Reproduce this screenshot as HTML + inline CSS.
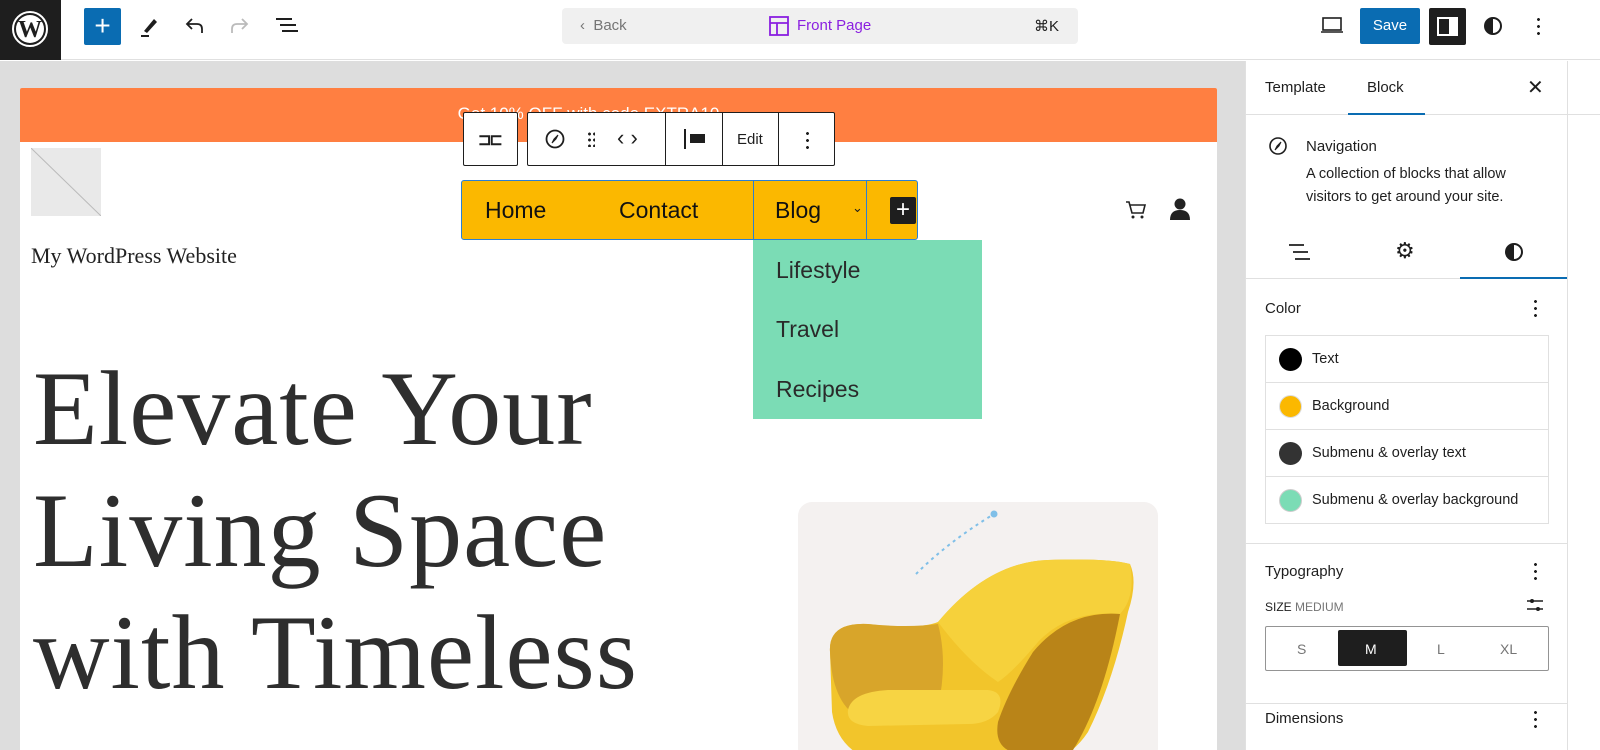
<!DOCTYPE html>
<html><head><meta charset="utf-8"><style>
*{box-sizing:border-box;margin:0;padding:0}
body{width:1600px;height:750px;overflow:hidden;font-family:"Liberation Sans",sans-serif;background:#fff;position:relative;color:#1e1e1e}
.abs{position:absolute}
.top{left:0;top:0;width:1600px;height:60px;background:#fff;border-bottom:1px solid #e0e0e0}
.canvas{left:0;top:61px;width:1245px;height:689px;background:#ddd}
.page{left:20px;top:88px;width:1197px;height:662px;background:#fff;border-radius:2px 2px 0 0;overflow:hidden}
.side{left:1245px;top:61px;width:355px;height:689px;background:#fff;border-left:1px solid #e0e0e0}
.tb{background:#fff;border:1px solid #1e1e1e;border-radius:2px;height:54px}
.nav{font-size:23px;color:#111}
.sub{font-size:23px;color:#2a2a2a}
.crow{height:47px;border-top:1px solid #e0e0e0;display:flex;align-items:center;padding-left:13px;font-size:14.5px}
.dot{width:23px;height:23px;border-radius:50%;margin-right:10px}
.dots{width:3px}
</style></head><body>
<div class="abs top"></div>
<div class="abs" style="left:0;top:0;width:61px;height:60px;background:#1e1e1e"></div>
<svg class="abs" style="left:11px;top:10px" width="38" height="38" viewBox="0 0 38 38"><circle cx="19" cy="19" r="17" fill="none" stroke="#fff" stroke-width="2"/><circle cx="19" cy="19" r="14" fill="#fff"/><text x="19" y="27" font-family="Liberation Serif" font-size="24" font-weight="bold" text-anchor="middle" fill="#1e1e1e">W</text></svg>
<div class="abs" style="left:84px;top:8px;width:37px;height:37px;background:#0a6cb2;border-radius:2px;color:#fff;font-size:28px;line-height:35px;text-align:center">+</div>
<svg class="abs" style="left:138px;top:14px" width="24" height="24" viewBox="0 0 24 24"><path d="M6 17 L16 5 L19 8 L9 19 Z" fill="#1e1e1e"/><rect x="3" y="21" width="8" height="2" fill="#1e1e1e"/></svg>
<svg class="abs" style="left:182px;top:14px" width="24" height="24" viewBox="0 0 24 24"><path d="M20 19 V15 Q20 10 15 10 H6 M10 5 L5 10 L10 15" fill="none" stroke="#1e1e1e" stroke-width="1.8"/></svg>
<svg class="abs" style="left:228px;top:14px" width="24" height="24" viewBox="0 0 24 24"><path d="M4 19 V15 Q4 10 9 10 H18 M14 5 L19 10 L14 15" fill="none" stroke="#bbb" stroke-width="1.8"/></svg>
<svg class="abs" style="left:274px;top:14px" width="26" height="24" viewBox="0 0 26 24"><path d="M2 5H18M6 11H22M8 17H24" stroke="#1e1e1e" stroke-width="2"/></svg>
<div class="abs" style="left:562px;top:8px;width:516px;height:36px;background:#f0f0f0;border-radius:4px"></div>
<div class="abs" style="left:580px;top:17px;font-size:15px;color:#757575">‹&nbsp;&nbsp;Back</div>
<svg class="abs" style="left:769px;top:16px" width="20" height="20" viewBox="0 0 20 20"><rect x="1" y="1" width="18" height="18" fill="none" stroke="#8a1fe0" stroke-width="1.8"/><path d="M1 7H19M8 7V19" stroke="#8a1fe0" stroke-width="1.8"/></svg>
<div class="abs" style="left:797px;top:17px;font-size:15px;color:#8a1fe0">Front Page</div>
<div class="abs" style="left:1034px;top:17px;font-size:15px;color:#1e1e1e">⌘K</div>
<svg class="abs" style="left:1320px;top:15px" width="24" height="20" viewBox="0 0 24 20"><rect x="3" y="3" width="18" height="12" fill="none" stroke="#1e1e1e" stroke-width="1.6"/><path d="M1 17H23" stroke="#1e1e1e" stroke-width="1.6"/></svg>
<div class="abs" style="left:1360px;top:8px;width:60px;height:36px;background:#0a6cb2;border-radius:2px;color:#fff;font-size:15px;line-height:36px;text-align:center">Save</div>
<div class="abs" style="left:1429px;top:8px;width:37px;height:37px;background:#1e1e1e;border-radius:2px"></div>
<svg class="abs" style="left:1436px;top:15px" width="23" height="23" viewBox="0 0 23 23"><rect x="2" y="3" width="19" height="17" fill="none" stroke="#fff" stroke-width="2"/><rect x="13" y="3" width="8" height="17" fill="#fff"/></svg>
<svg class="abs" style="left:1483px;top:16px" width="20" height="20" viewBox="0 0 20 20"><circle cx="10" cy="10" r="8" fill="none" stroke="#1e1e1e" stroke-width="2"/><path d="M10 2 A8 8 0 0 0 10 18Z" fill="#1e1e1e"/></svg>
<div class="abs" style="left:1537px;top:16px;width:3px;height:20px;background:radial-gradient(circle,#1e1e1e 1.3px,transparent 1.6px) 0 0/3px 7px"></div>

<div class="abs canvas"></div>
<div class="abs page">
  <div style="height:54px;background:#ff7f41;color:#fff;font-size:17px;text-align:center;padding-top:16px;padding-right:60px">Get 10% OFF with code EXTRA10</div>
  <div class="abs" style="left:11px;top:60px;width:70px;height:68px;background:#e9e9e9;overflow:hidden"><svg width="70" height="68"><path d="M0 0L70 68" stroke="#bbb"/></svg></div>
  <div class="abs" style="left:11px;top:155px;font-family:'Liberation Serif',serif;font-size:22px;color:#222">My WordPress Website</div>
  <div class="abs" style="left:13px;top:260px;font-family:'Liberation Serif',serif;font-size:106px;line-height:122px;color:#2e2e2e;white-space:nowrap;letter-spacing:1px">Elevate Your<br>Living Space<br>with Timeless</div>
  <svg class="abs" style="left:1104px;top:110px" width="24" height="24" viewBox="0 0 24 24"><path d="M2 4H5L8 15H19L21 7H6" fill="none" stroke="#222" stroke-width="1.6"/><circle cx="9" cy="19" r="1.5" fill="#222"/><circle cx="18" cy="19" r="1.5" fill="#222"/></svg>
  <svg class="abs" style="left:1148px;top:108px" width="24" height="26" viewBox="0 0 24 26"><circle cx="12" cy="8" r="5.5" fill="#222"/><path d="M2 24Q2 14 12 14Q22 14 22 24Z" fill="#222"/></svg>
  <div class="abs" style="left:778px;top:414px;width:360px;height:260px;background:#f4f1f0;border-radius:14px;overflow:hidden">
    <svg width="360" height="260" viewBox="0 0 360 260">
      <path d="M118 72 Q150 40 196 12" fill="none" stroke="#7fbfe8" stroke-width="2" stroke-dasharray="3 4"/>
      <circle cx="196" cy="12" r="3.5" fill="#7fbfe8"/>
      <path d="M32 150 Q30 120 70 122 Q120 128 140 120 Q190 60 250 58 Q310 56 332 62 Q340 80 330 110 Q315 180 290 230 Q270 260 240 260 L80 260 Q40 250 34 210 Z" fill="#f2c52b"/>
      <path d="M140 120 Q190 60 250 58 Q310 56 332 62 Q338 95 322 112 Q270 108 240 140 Q215 170 200 180 Q170 160 140 120Z" fill="#f6d13b"/>
      <path d="M32 150 Q30 120 70 122 Q110 126 140 122 Q150 160 140 205 L60 215 Q34 200 32 150Z" fill="#d8a52a"/>
      <path d="M50 208 Q54 190 90 188 L190 188 Q208 190 200 210 Q190 222 170 222 L70 224 Q48 222 50 208Z" fill="#f7d443"/>
      <path d="M322 112 Q270 108 235 150 Q210 190 200 220 Q195 250 225 252 L275 248 Q305 200 322 112Z" fill="#b98418"/>
    </svg>
  </div>
</div>

<!-- block toolbar -->
<div class="abs tb" style="left:463px;top:112px;width:55px"></div>
<div class="abs" style="left:478px;top:130px;font-size:16px;font-weight:bold;letter-spacing:-2px">⊐⊏</div>
<div class="abs tb" style="left:527px;top:112px;width:308px"></div>
<div class="abs" style="left:665px;top:113px;width:1px;height:52px;background:#1e1e1e"></div>
<div class="abs" style="left:722px;top:113px;width:1px;height:52px;background:#1e1e1e"></div>
<div class="abs" style="left:778px;top:113px;width:1px;height:52px;background:#1e1e1e"></div>
<svg class="abs" style="left:544px;top:128px" width="22" height="22" viewBox="0 0 22 22"><circle cx="11" cy="11" r="8.5" fill="none" stroke="#1e1e1e" stroke-width="1.8"/><path d="M14 7L10 11L8 15L12 11Z" fill="#1e1e1e" stroke="#1e1e1e"/></svg>
<div class="abs" style="left:587px;top:131px;width:8px;height:16px;background:radial-gradient(circle,#1e1e1e 1.3px,transparent 1.6px) 0 0/5px 6px"></div>
<div class="abs" style="left:617px;top:125px;font-size:22px">‹ ›</div>
<div class="abs" style="left:684px;top:129px;width:2px;height:20px;background:#1e1e1e"></div>
<div class="abs" style="left:690px;top:134px;width:15px;height:9px;background:#1e1e1e"></div>
<div class="abs" style="left:737px;top:131px;font-size:15px">Edit</div>
<div class="abs" style="left:806px;top:130px;width:3px;height:19px;background:radial-gradient(circle,#1e1e1e 1.3px,transparent 1.6px) 0 0/3px 7px"></div>

<!-- nav -->
<div class="abs" style="left:461px;top:180px;width:457px;height:60px;background:#fbb800;border:1.5px solid #2a7fd4;border-radius:3px"></div>
<div class="abs" style="left:753px;top:181px;width:1px;height:58px;background:#2a7fd4"></div>
<div class="abs" style="left:866px;top:181px;width:1px;height:58px;background:#2a7fd4"></div>
<div class="abs nav" style="left:485px;top:197px">Home</div>
<div class="abs nav" style="left:619px;top:197px">Contact</div>
<div class="abs nav" style="left:775px;top:197px">Blog</div>
<div class="abs" style="left:852px;top:200px;font-size:13px">⌄</div>
<div class="abs" style="left:890px;top:197px;width:26px;height:27px;background:#1e1e1e;color:#fff;font-size:24px;line-height:26px;text-align:center;border-radius:2px">+</div>
<div class="abs" style="left:753px;top:240px;width:229px;height:179px;background:#7bdcb5"></div>
<div class="abs sub" style="left:776px;top:257px">Lifestyle</div>
<div class="abs sub" style="left:776px;top:316px">Travel</div>
<div class="abs sub" style="left:776px;top:376px">Recipes</div>

<!-- sidebar -->
<div class="abs side"></div>
<div class="abs" style="left:1246px;top:114px;width:354px;height:1px;background:#e0e0e0"></div>
<div class="abs" style="left:1265px;top:79px;font-size:15px">Template</div>
<div class="abs" style="left:1367px;top:79px;font-size:15px">Block</div>
<div class="abs" style="left:1348px;top:113px;width:77px;height:2px;background:#0a6cb2"></div>
<div class="abs" style="left:1527px;top:75px;font-size:20px">✕</div>
<svg class="abs" style="left:1268px;top:136px" width="20" height="20" viewBox="0 0 20 20"><circle cx="10" cy="10" r="8" fill="none" stroke="#1e1e1e" stroke-width="1.6"/><path d="M13 6L9 10L7 14L11 10Z" fill="#1e1e1e" stroke="#1e1e1e"/></svg>
<div class="abs" style="left:1306px;top:138px;font-size:15px">Navigation</div>
<div class="abs" style="left:1306px;top:163px;font-size:14.5px;line-height:23px;width:245px">A collection of blocks that allow visitors to get around your site.</div>
<svg class="abs" style="left:1288px;top:243px" width="24" height="18" viewBox="0 0 24 18"><path d="M1 2H16M5 9H20M7 16H22" stroke="#1e1e1e" stroke-width="1.8"/></svg>
<div class="abs" style="left:1395px;top:238px;font-size:22px">⚙</div>
<svg class="abs" style="left:1504px;top:242px" width="20" height="20" viewBox="0 0 20 20"><circle cx="10" cy="10" r="8" fill="none" stroke="#1e1e1e" stroke-width="2"/><path d="M10 2 A8 8 0 0 0 10 18Z" fill="#1e1e1e"/></svg>
<div class="abs" style="left:1246px;top:278px;width:321px;height:1px;background:#e0e0e0"></div>
<div class="abs" style="left:1460px;top:277px;width:107px;height:2px;background:#0a6cb2"></div>
<div class="abs" style="left:1567px;top:61px;width:1px;height:689px;background:#e0e0e0"></div>
<div class="abs" style="left:1265px;top:300px;font-size:15px">Color</div>
<div class="abs" style="left:1534px;top:298px;width:3px;height:19px;background:radial-gradient(circle,#1e1e1e 1.3px,transparent 1.6px) 0 0/3px 7px"></div>
<div class="abs" style="left:1265px;top:335px;width:284px;height:189px;border:1px solid #e0e0e0;border-top:none">
  <div class="crow"><div class="dot" style="background:#000"></div>Text</div>
  <div class="crow"><div class="dot" style="background:#fbb800;border:1px solid #ddd"></div>Background</div>
  <div class="crow"><div class="dot" style="background:#333"></div>Submenu &amp; overlay text</div>
  <div class="crow"><div class="dot" style="background:#7bdcb5;border:1px solid #ccc"></div>Submenu &amp; overlay background</div>
</div>
<div class="abs" style="left:1246px;top:543px;width:321px;height:1px;background:#e0e0e0"></div>
<div class="abs" style="left:1265px;top:563px;font-size:15px">Typography</div>
<div class="abs" style="left:1534px;top:561px;width:3px;height:19px;background:radial-gradient(circle,#1e1e1e 1.3px,transparent 1.6px) 0 0/3px 7px"></div>
<div class="abs" style="left:1265px;top:600px;font-size:12px">SIZE <span style="color:#757575">MEDIUM</span></div>
<svg class="abs" style="left:1526px;top:597px" width="18" height="16" viewBox="0 0 18 16"><path d="M1 4H17M1 12H17" stroke="#1e1e1e" stroke-width="1.5"/><circle cx="6" cy="4" r="2" fill="#1e1e1e"/><circle cx="12" cy="12" r="2" fill="#1e1e1e"/></svg>
<div class="abs" style="left:1265px;top:626px;width:284px;height:45px;border:1px solid #949494;border-radius:2px"></div>
<div class="abs" style="left:1338px;top:630px;width:69px;height:36px;background:#1e1e1e;border-radius:2px"></div>
<div class="abs" style="left:1297px;top:641px;font-size:14px;color:#757575">S</div>
<div class="abs" style="left:1365px;top:641px;font-size:14px;color:#fff">M</div>
<div class="abs" style="left:1437px;top:641px;font-size:14px;color:#757575">L</div>
<div class="abs" style="left:1500px;top:641px;font-size:14px;color:#757575">XL</div>
<div class="abs" style="left:1246px;top:703px;width:321px;height:1px;background:#e0e0e0"></div>
<div class="abs" style="left:1265px;top:710px;font-size:15px">Dimensions</div>
<div class="abs" style="left:1534px;top:709px;width:3px;height:19px;background:radial-gradient(circle,#1e1e1e 1.3px,transparent 1.6px) 0 0/3px 7px"></div>
</body></html>
